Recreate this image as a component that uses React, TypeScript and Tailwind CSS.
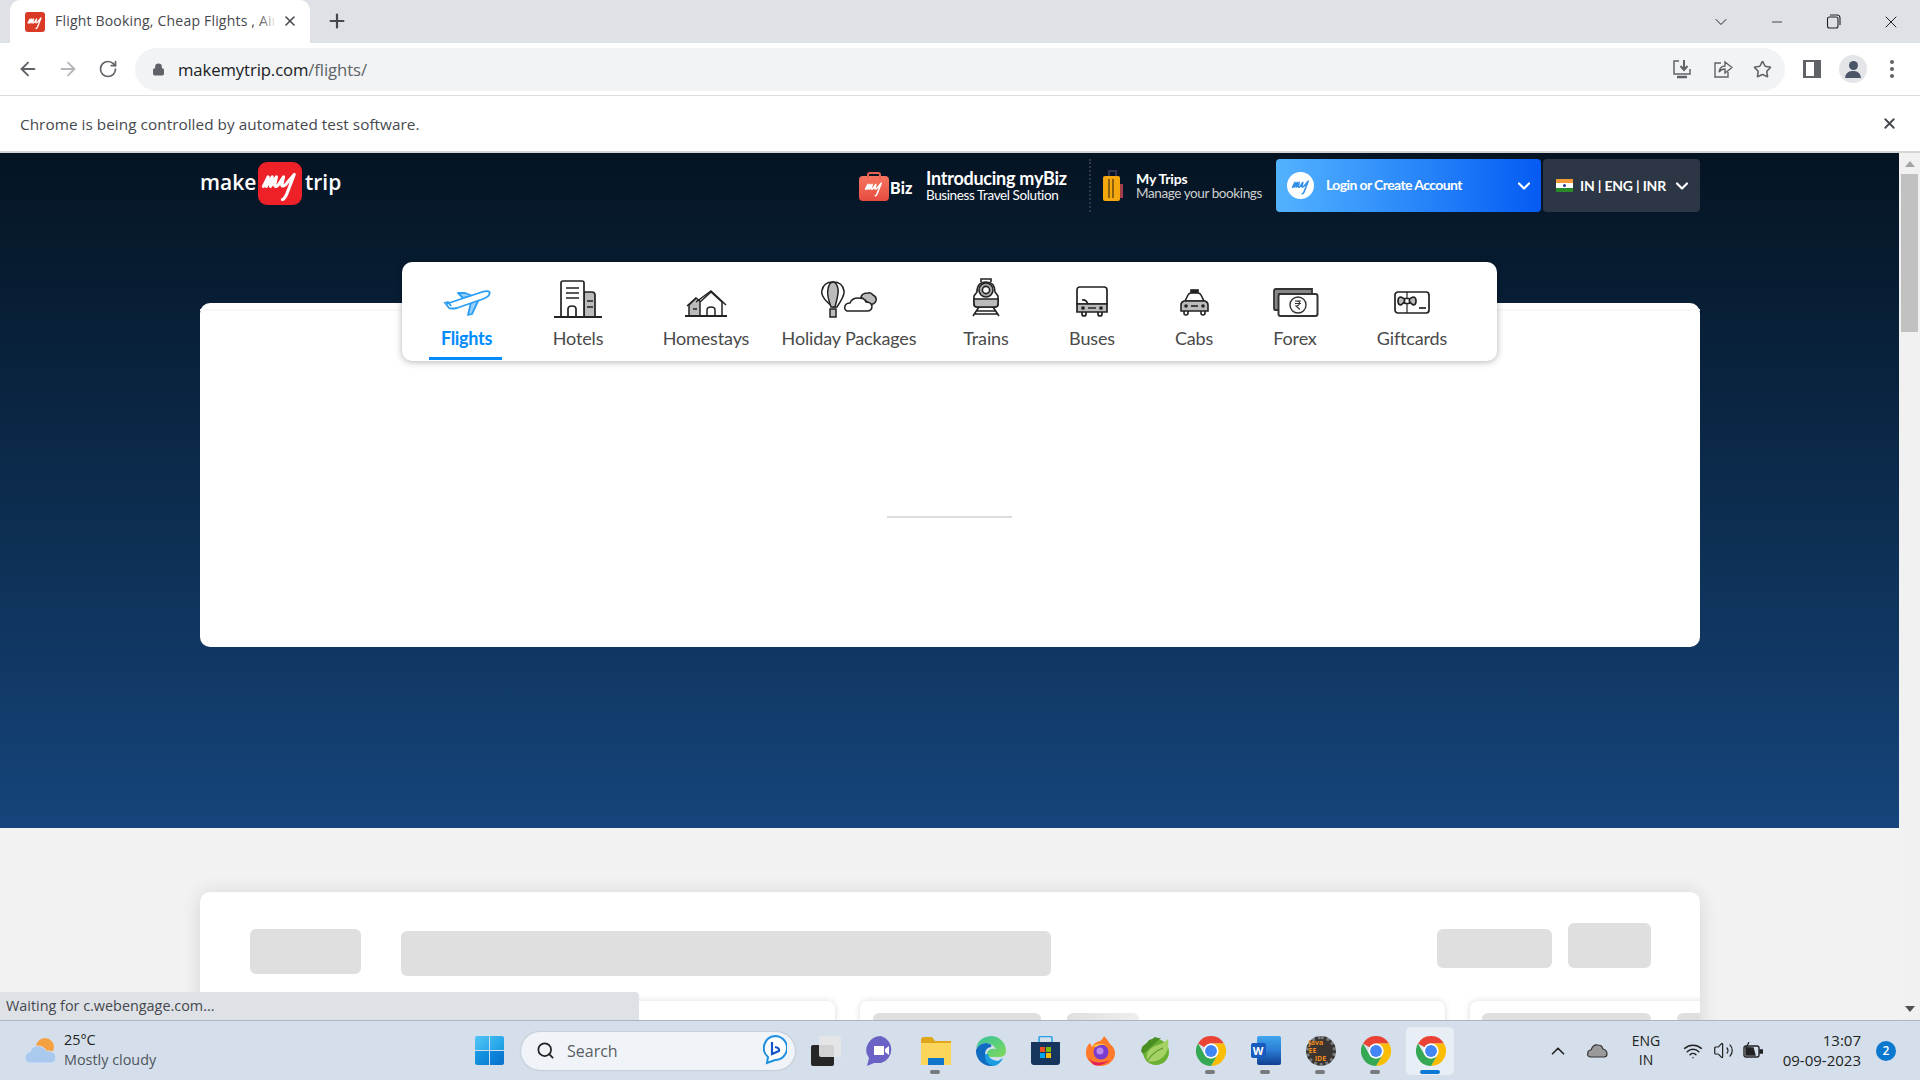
import { ReactNode } from "react";
import { ArrowLeft, ArrowRight, ChevronDown, ChevronUp, Lock, Minus, Plus, RotateCw, Search, Star, Volume2, Wifi, X } from "lucide-react";

function MyMark({ color = "#fff", className = "" }: { color?: string; className?: string }) {
  return (
    <svg viewBox="0 0 32 30" className={className} fill="none" stroke={color} strokeWidth="2.6" strokeLinecap="round" strokeLinejoin="round">
      <path d="M2 17 L6 9 L4.5 17 L9.5 9 L8 17 L13 9 L11.5 16 C12 18 14 17 15 15 L19 9 L17.5 16 C18 17 20 17 22 14 L28 7 L23 20 C21 26 19 28 18 28" />
    </svg>
  );
}

function ChromeLogo({ size = 30 }: { size?: number }) {
  return (
    <svg viewBox="0 0 48 48" width={size} height={size}>
      <path fill="#ea4335" d="M3.2 12A24 24 0 0 1 44.8 12H24a12 12 0 0 0-10.4 6z" />
      <path fill="#fbbc04" d="M44.8 12H24a12 12 0 0 1 10.4 18L24 48A24 24 0 0 0 44.8 12z" />
      <path fill="#34a853" d="M3.2 12L13.6 30a12 12 0 0 0 20.8 0L24 48A24 24 0 0 1 3.2 12z" />
      <circle cx="24" cy="24" r="12" fill="#fff" />
      <circle cx="24" cy="24" r="9.5" fill="#4285f4" />
    </svg>
  );
}

function PlaneIcon() {
  return (
    <svg width="48" height="27" viewBox="0 0 48 27" fill="none" stroke="#2a9df4" strokeWidth="1.8" strokeLinejoin="round">
      <path fill="#9ad0f8" d="M20 9 L15 4 H22 L30 7z" />
      <path fill="#9ad0f8" d="M28 13 L25 26 L29 25 L36 10z" />
      <path fill="#fff" d="M3 15 L36 4 Q44 1 46.5 3 Q47.5 7 40 10 L14 19 Q8 20 6 19z" />
      <path d="M1 14 L5 13 L8 17" />
    </svg>
  );
}

function HotelIcon() {
  return (
    <svg width="48" height="38" viewBox="0 0 48 38" fill="none" stroke="#222" strokeWidth="1.7">
      <path fill="#bbb" d="M30 12 H38 Q41 12 41 15 V37 H30z" />
      <path fill="#fff" d="M7 37 V3 Q7 1 9 1 H28 Q30 1 30 3 V37z" />
      <path d="M12 8 H25 M12 13 H25 M12 18 H25 M33 21 H39 M33 27 H39" />
      <path fill="#fff" d="M14 37 V29 Q14 26 18 26 Q22 26 22 29 V37" />
      <path d="M0 37 H48" strokeWidth="2" />
    </svg>
  );
}

function HomeIcon() {
  return (
    <svg width="42" height="27" viewBox="0 0 42 27" fill="none" stroke="#222" strokeWidth="1.5">
      <path fill="#bbb" d="M4 26 V15 L11 8 L16 12 V26z" />
      <path d="M2 16 L11 8" />
      <path fill="#fff" d="M15 26 V12 L26 2 L37 12 V26z" />
      <path d="M11 12 L26 1 L41 15 M8 19 H12" />
      <path fill="#fff" d="M22 26 V20 Q22 17 26 17 Q30 17 30 20 V26" />
      <path d="M0 26 H42" strokeWidth="1.8" />
    </svg>
  );
}

function BalloonIcon() {
  return (
    <svg width="57" height="37" viewBox="0 0 57 37" fill="none" stroke="#222" strokeWidth="1.5">
      <path fill="#fff" d="M12 26 C4 20 0 14 0.8 10 C2 3 7 1 12 1 C17 1 22 3 23 10 C24 14 20 20 16 26z" />
      <path fill="#bbb" d="M10 26 C7 18 6 12 7 8 C8 3 10 1 12 1 C14 1 16 3 17 8 C18 12 16 18 14 26z" />
      <path fill="#bbb" d="M9 28 H15 V36 H9z" />
      <path fill="#bbb" d="M40 16 Q41 12 47 12 Q50 11 52 14 Q56 16 55 20 Q53 24 49 23z" />
      <path fill="#fff" d="M26 30 Q23 29 24 25 Q25 22 29 22 Q31 17 37 17 Q44 17 45 21 Q50 21 51 25 Q51 30 46 30z" />
    </svg>
  );
}

function TrainIcon() {
  return (
    <svg width="28" height="39" viewBox="0 0 28 39" fill="none" stroke="#222" strokeWidth="1.6">
      <path d="M9 4 V1 H19 V4" />
      <path fill="#fff" d="M5 14 Q5 4 14 4 Q23 4 23 14 L26 18 V26 Q26 29 23 29 H5 Q2 29 2 26 V18z" />
      <circle cx="14" cy="12" r="7" fill="#aaa" />
      <circle cx="14" cy="12" r="3.6" fill="#fff" />
      <path fill="#bbb" d="M2 21 H26 V26 Q26 29 23 29 H5 Q2 29 2 26z" />
      <path d="M7 29 L1 38 M21 29 L27 38 M5 33 H23 M3 36 H25" />
    </svg>
  );
}

function BusIcon() {
  return (
    <svg width="32" height="31" viewBox="0 0 32 31" fill="none" stroke="#222" strokeWidth="1.7">
      <path fill="#fff" d="M1 4 Q1 1 4 1 H28 Q31 1 31 4 V18 H1z" />
      <path fill="#bbb" d="M1 18 H31 V26 H1z" />
      <path d="M6 14 Q10 13 12 18" />
      <circle cx="7" cy="22" r="1" fill="#222" />
      <circle cx="25" cy="22" r="1" fill="#222" />
      <path d="M12 22 H20" strokeWidth="1.4" />
      <path d="M6 26 V28 Q6 30 8 30 Q10 30 10 28 V26 M22 26 V28 Q22 30 24 30 Q26 30 26 28 V26" />
    </svg>
  );
}

function CabIcon() {
  return (
    <svg width="29" height="27" viewBox="0 0 29 27" fill="none" stroke="#222" strokeWidth="1.6">
      <rect x="11" y="1" width="7" height="3" fill="#222" />
      <path fill="#fff" d="M5 12 L8 6 Q9 4 11 4 H18 Q20 4 21 6 L24 12z" />
      <path fill="#bbb" d="M4 12 H25 Q28 13 28 16 V22 H1 V16 Q1 13 4 12z" />
      <circle cx="6" cy="17" r="1" fill="#222" />
      <circle cx="23" cy="17" r="1" fill="#222" />
      <path d="M11 17 H18" />
      <path d="M4 22 V24 Q4 26 6 26 Q8 26 8 24 V22 M21 22 V24 Q21 26 23 26 Q25 26 25 24 V22" />
    </svg>
  );
}

function ForexIcon() {
  return (
    <svg width="47" height="29" viewBox="0 0 47 29" fill="none" stroke="#333" strokeWidth="1.8">
      <path fill="#888" d="M2 3 Q2 1 4 1 H40 V6 H7 V22 H3 Q2 22 2 20z" />
      <rect x="6.5" y="6" width="39" height="22" rx="2" fill="#fff" strokeWidth="2" />
      <circle cx="26" cy="17" r="8" fill="#fff" strokeWidth="1.4" />
      <path d="M23 13 H29 M23 15.5 H29 M24 13 Q28 13 27.5 15.5 Q27 18 24 18 L28 21.5" strokeWidth="1.1" />
    </svg>
  );
}

function GiftIcon() {
  return (
    <svg width="36" height="23" viewBox="0 0 36 23" fill="none" stroke="#222" strokeWidth="1.7">
      <rect x="1" y="1" width="34" height="21" rx="3" fill="#fff" />
      <path d="M13 1 V22" strokeWidth="1.2" />
      <path fill="#bbb" d="M13 9 L7 6 Q4 6 4 10 Q4 14 7 14z" />
      <path fill="#bbb" d="M13 9 L19 6 Q22 6 22 10 Q22 14 19 14z" />
      <rect x="10.5" y="7.5" width="5" height="5" rx="1" fill="#fff" />
      <path d="M25 17 H32" />
    </svg>
  );
}

const navItems: { label: string; icon: ReactNode; width: string; iconPad: string; active?: boolean }[] = [
  { label: "Flights", icon: <PlaneIcon />, width: "w-[75px]", iconPad: "pb-[2px]", active: true },
  { label: "Hotels", icon: <HotelIcon />, width: "w-[148px]", iconPad: "pb-0" },
  { label: "Homestays", icon: <HomeIcon />, width: "w-[108px]", iconPad: "pb-[1px]" },
  { label: "Holiday Packages", icon: <BalloonIcon />, width: "w-[178px]", iconPad: "pb-0" },
  { label: "Trains", icon: <TrainIcon />, width: "w-[96px]", iconPad: "pb-[1px]" },
  { label: "Buses", icon: <BusIcon />, width: "w-[116px]", iconPad: "pb-[1px]" },
  { label: "Cabs", icon: <CabIcon />, width: "w-[88px]", iconPad: "pb-[2px]" },
  { label: "Forex", icon: <ForexIcon />, width: "w-[114px]", iconPad: "pb-[1px]" },
  { label: "Giftcards", icon: <GiftIcon />, width: "w-[120px]", iconPad: "pb-[4px]" },
];

function BrowserChrome() {
  return (
    <div className="shrink-0 font-['Open_Sans',sans-serif]">
      <div className="h-[43px] bg-[#dee1e6] flex items-end pl-[10px]">
        <div className="relative w-[300px] h-[43px] bg-white rounded-t-[10px] flex items-center pl-[15px] text-[#45484d]">
          <div className="w-5 h-5 rounded-[3px] bg-[#d93a26] flex items-center justify-center">
            <MyMark className="w-4 h-4" />
          </div>
          <span className="ml-[10px] -mt-[2px] w-[219px] overflow-hidden whitespace-nowrap text-[14px] tracking-[0.2px]">Flight Booking, Cheap Flights , Air Tickets</span>
          <div className="absolute left-[248px] top-[8px] w-[20px] h-[26px] bg-gradient-to-r from-white/0 to-white" />
          <X size={16} strokeWidth={2.4} className="absolute left-[272px] top-[13px] text-[#45484d]" />
        </div>
        <Plus size={22} strokeWidth={2.4} className="ml-[16px] mb-[11px] text-[#45484d]" />
        <div className="ml-auto flex items-center h-[43px] text-[#222]">
          <ChevronDown size={20} strokeWidth={1.2} className="mr-[38px]" />
          <Minus size={16} strokeWidth={1.2} className="mr-[41px]" />
          <svg width="15" height="15" viewBox="0 0 15 15" fill="none" stroke="#222" strokeWidth="1.1" className="mr-[40px]">
            <rect x="1.5" y="3" width="10.5" height="11" rx="2" />
            <path d="M4 1 H11 Q14 1 14 4 V11" />
          </svg>
          <X size={20} strokeWidth={1.2} className="mr-[19px]" />
        </div>
      </div>
      <div className="h-[53px] bg-white border-b border-[#dadce0] flex items-center text-[#5f6368]">
        <ArrowLeft size={22} strokeWidth={2} className="ml-[17px]" />
        <ArrowRight size={22} strokeWidth={2} className="ml-[18px] text-[#b4b6b9]" />
        <RotateCw size={20} strokeWidth={2} className="ml-[19px]" />
        <div className="ml-[17px] w-[1650px] h-[43px] rounded-full bg-[#f1f3f4] flex items-center pl-[17px]">
          <Lock size={13} fill="#5f6368" strokeWidth={2.2} />
          <span className="ml-[13px] mt-[1px] text-[16.7px] tracking-[-0.1px] text-[#202124]">
            makemytrip.com<span className="text-[#5f6368]">/flights/</span>
          </span>
          <div className="ml-auto flex items-center">
            <svg width="20" height="20" viewBox="0 0 20 20" fill="none" stroke="#5f6368" strokeWidth="1.5">
              <path d="M7 2 H2 V15 H18 V10" />
              <path d="M12 1 V10 M8.5 7 L12 11 L15.5 7" strokeWidth="2" />
              <path d="M5 18 H15" strokeWidth="2.5" />
            </svg>
            <svg width="20" height="20" viewBox="0 0 20 20" fill="none" stroke="#5f6368" strokeWidth="1.4" className="ml-[21px]">
              <path d="M8 4 H2 V18 H15 V13" />
              <path d="M6 13 Q7 7 12 7 V3 L19 8.5 L12 14 V10 Q8 10 6 13z" />
            </svg>
            <Star size={19} strokeWidth={2} className="ml-[20px] mr-[13px]" />
          </div>
        </div>
        <div className="ml-[18px] w-[18px] h-[18px] border-[2px] border-[#5f6368] border-l-[3px] border-r-[7px] bg-white" />
        <div className="ml-[18px] w-[28px] h-[28px] rounded-full bg-[#e3e5e8] flex flex-col items-center justify-center">
          <div className="w-[9px] h-[9px] rounded-full bg-[#4a5568]" />
          <div className="mt-[1px] w-[16px] h-[7px] rounded-t-full bg-[#4a5568]" />
        </div>
        <div className="ml-[23px] flex flex-col gap-[3px]">
          <div className="w-[4px] h-[4px] rounded-full bg-[#5f6368]" />
          <div className="w-[4px] h-[4px] rounded-full bg-[#5f6368]" />
          <div className="w-[4px] h-[4px] rounded-full bg-[#5f6368]" />
        </div>
      </div>
      <div className="h-[57px] bg-white border-b-2 border-[#d5d5d5] flex items-center pl-[20px] pr-[22px] justify-between">
        <span className="text-[15.3px] mt-[1px] text-[#45484d] tracking-[0.05px]">Chrome is being controlled by automated test software.</span>
        <X size={17} strokeWidth={2.6} className="text-[#45484d]" />
      </div>
    </div>
  );
}

function Header() {
  return (
    <div className="flex items-start pt-[6px] h-[59px] text-white">
      <div className="flex items-center mt-[3px] text-[21px] font-semibold font-['Open_Sans',sans-serif]">
        <span className="w-[58px] -mt-[2px]">make</span>
        <div className="w-[44px] h-[43px] rounded-[9px] bg-[#ee2128] flex items-center justify-center">
          <MyMark className="w-[38px] h-[36px]" />
        </div>
        <span className="ml-[3px] -mt-[2px]">trip</span>
      </div>
      <div className="ml-auto flex items-center h-[53px]">
        <div className="flex items-center w-[54px] ml-[1px]">
          <div className="relative w-[30px] h-[25px] mt-[5px] rounded-[4px] bg-gradient-to-b from-[#f57560] to-[#e64a3f] flex items-center justify-center">
            <div className="absolute -top-[4px] left-[8px] w-[14px] h-[6px] rounded-t-[3px] border-2 border-b-0 border-[#e8604f]" />
            <MyMark className="w-[20px] h-[18px]" />
          </div>
          <span className="ml-[1px] mt-[5px] text-[16px] font-black font-['Lato',sans-serif] tracking-[0.2px]">Biz</span>
        </div>
        <div className="ml-[13px] w-[150px] font-['Lato',sans-serif]">
          <div className="text-[18px] font-bold leading-[19px] tracking-[-0.25px] whitespace-nowrap">Introducing myBiz</div>
          <div className="text-[13.5px] leading-[14px] tracking-[-0.4px] whitespace-nowrap">Business Travel Solution</div>
        </div>
        <div className="ml-[13px] h-[53px] border-l-2 border-dotted border-[#2e3a4a]" />
        <svg width="20" height="31" viewBox="0 0 20 31" className="ml-[12px]">
          <path d="M6 7 V1 H13 V7" fill="none" stroke="#333355" strokeWidth="2" />
          <rect x="0" y="6" width="17" height="25" rx="2" fill="#f5a70e" />
          <rect x="17" y="14" width="3" height="14" fill="#a23c46" />
          <path d="M6 9 V28 M10 9 V28" stroke="#6a4a10" strokeWidth="1.5" />
        </svg>
        <div className="ml-[13px] w-[140px] font-['Lato',sans-serif]">
          <div className="text-[14px] font-bold leading-[15px] tracking-[-0.2px]">My Trips</div>
          <div className="text-[13.5px] leading-[15px] tracking-[-0.4px] text-[#cfcfcf] whitespace-nowrap">Manage your bookings</div>
        </div>
        <div className="w-[265px] h-[53px] rounded-[4px] bg-gradient-to-r from-[#53b2fe] to-[#065af3] flex items-center pl-[11px] font-['Lato',sans-serif]">
          <div className="w-[27px] h-[27px] rounded-full bg-white flex items-center justify-center">
            <MyMark color="#2f8de8" className="w-[20px] h-[18px]" />
          </div>
          <span className="ml-[12px] text-[14px] font-bold tracking-[-0.6px] -mt-[3px]">Login or Create Account</span>
          <ChevronDown size={20} strokeWidth={2.6} className="ml-auto mr-[7px]" />
        </div>
        <div className="ml-[2px] w-[157px] h-[53px] rounded-[4px] bg-[#2c3644] flex items-center pl-[13px] font-['Lato',sans-serif]">
          <div className="w-[17px] h-[14px] flex flex-col">
            <div className="h-1/3 bg-[#f29b38]" />
            <div className="h-1/3 bg-white flex items-center justify-center">
              <div className="w-[3px] h-[3px] rounded-full bg-[#2b3a8f]" />
            </div>
            <div className="h-1/3 bg-[#2a8a2a]" />
          </div>
          <span className="ml-[7px] text-[14px] font-bold whitespace-nowrap tracking-[-0.2px]">IN | ENG | INR</span>
          <ChevronDown size={20} strokeWidth={2.6} className="ml-auto mr-[8px]" />
        </div>
      </div>
    </div>
  );
}

function TabNav() {
  return (
    <div className="relative z-10 ml-[202px] mr-[203px] mt-[50px] h-[99px] bg-white rounded-[10px] shadow-[0_1px_7px_rgba(0,0,0,0.3)] flex pl-[27px] font-['Lato',sans-serif]">
      {navItems.map((item) => (
        <div key={item.label} className={`${item.width} shrink-0 flex flex-col items-center`}>
          <div className={`h-[56px] flex items-end justify-center ${item.iconPad}`}>{item.icon}</div>
          <div className={`mt-[9px] text-[18px] leading-[22px] whitespace-nowrap ${item.active ? "font-bold text-[#008cff] tracking-[-0.3px]" : "text-[#4a4a4a] tracking-[-0.15px]"}`}>{item.label}</div>
          {item.active && <div className="mt-[8px] mr-[3px] w-[73px] h-[3px] bg-[#008cff]" />}
        </div>
      ))}
    </div>
  );
}

function LowerSection() {
  return (
    <div className="ml-[200px] mr-[199px] mt-[64px] h-[300px] bg-white rounded-t-[10px] overflow-hidden shadow-[0_1px_20px_rgba(0,0,0,0.12)]">
      <div className="flex items-start pl-[50px] pr-[49px]">
        <div className="mt-[37px] w-[111px] h-[45px] rounded-[6px] bg-[#e0dfe0]" />
        <div className="mt-[39px] ml-[40px] w-[650px] h-[45px] rounded-[6px] bg-[#e0dfe0]" />
        <div className="mt-[37px] ml-auto w-[115px] h-[39px] rounded-[6px] bg-[#e0dfe0]" />
        <div className="mt-[31px] ml-[16px] w-[83px] h-[45px] rounded-[6px] bg-[#e0dfe0]" />
      </div>
      <div className="mt-[25px] ml-[50px] flex gap-[25px] w-[1650px]">
        <div className="w-[585px] shrink-0 h-[100px] rounded-[8px] bg-white shadow-[0_0_6px_rgba(0,0,0,0.15)]" />
        <div className="w-[585px] shrink-0 h-[100px] rounded-[8px] bg-white shadow-[0_0_6px_rgba(0,0,0,0.15)] flex gap-[26px] pl-[13px] pt-[12px]">
          <div className="w-[168px] h-[30px] rounded-[6px] bg-[#e0dfe0]" />
          <div className="w-[72px] h-[30px] rounded-[6px] bg-gradient-to-r from-[#e0dfe0] to-[#eeeeee]" />
        </div>
        <div className="w-[400px] shrink-0 h-[100px] rounded-[8px] bg-white shadow-[0_0_6px_rgba(0,0,0,0.15)] flex gap-[26px] pl-[12px] pt-[12px]">
          <div className="w-[169px] h-[30px] rounded-[6px] bg-[#e0dfe0]" />
          <div className="w-[72px] h-[30px] rounded-[6px] bg-[#e0dfe0]" />
        </div>
      </div>
    </div>
  );
}

function Scrollbar() {
  return (
    <div className="w-[21px] shrink-0 bg-[#f1f1f1] flex flex-col items-center">
      <svg width="10" height="6" viewBox="0 0 10 6" className="mt-[8px] shrink-0"><path d="M5 0 L10 6 H0z" fill="#a3a3a3" /></svg>
      <div className="mt-[7px] w-[17px] h-[158px] bg-[#c1c1c1]" />
      <svg width="10" height="6" viewBox="0 0 10 6" className="mt-auto mb-[8px] shrink-0"><path d="M5 6 L10 0 H0z" fill="#505050" /></svg>
    </div>
  );
}

function TaskIcon({ children, dot, active }: { children: ReactNode; dot?: boolean; active?: boolean }) {
  return (
    <div className="relative w-[55px] h-full flex items-center justify-center">
      {active && <div className="absolute left-[3px] top-[6px] w-[48px] h-[48px] rounded-[5px] bg-[#e8eef5]" />}
      <div className="relative">{children}</div>
      {dot && <div className="absolute left-[22px] bottom-[6px] w-[10px] h-[4px] rounded-full bg-[#77797c]" />}
      {active && <div className="absolute left-[17px] bottom-[6px] w-[20px] h-[4px] rounded-full bg-[#0a78d4]" />}
    </div>
  );
}

function WinLogo() {
  return (
    <div className="w-[29px] h-[29px] grid grid-cols-2 gap-[1px] shrink-0">
      <div className="bg-gradient-to-br from-[#52c5f5] to-[#2aa8ea] rounded-tl-[2px]" />
      <div className="bg-gradient-to-br from-[#3cb7f0] to-[#1a9ce3] rounded-tr-[2px]" />
      <div className="bg-gradient-to-br from-[#1a9ce3] to-[#0b7fd6] rounded-bl-[2px]" />
      <div className="bg-gradient-to-br from-[#0f8be0] to-[#0a6fc9] rounded-br-[2px]" />
    </div>
  );
}

function Taskbar() {
  return (
    <div className="h-[60px] shrink-0 bg-[#d5dfeb] border-t border-[#adb5bf] flex items-center font-['Open_Sans',sans-serif] text-[#222]">
      <div className="w-[475px] shrink-0 flex items-center pl-[25px]">
        <svg width="31" height="29" viewBox="0 0 31 29">
          <circle cx="20" cy="11" r="9" fill="#f5a142" />
          <path d="M6 27 Q0 27 0 22 Q0 17 5 16 Q7 9 14 10 Q20 11 21 15 Q30 14 31 21 Q31 27 25 27z" fill="#a9c9ee" stroke="#d8e6f6" strokeWidth="0.8" />
        </svg>
        <div className="ml-[8px] -mt-[2px] text-[14.4px] leading-[20px]">
          <div>25°C</div>
          <div className="text-[#4e545c]">Mostly cloudy</div>
        </div>
      </div>
      <WinLogo />
      <div className="ml-[17px] w-[274px] h-[38px] rounded-full bg-[#f0f4f9] shadow-[0_0_2px_rgba(0,0,0,0.25)] flex items-center pl-[15px] pr-[8px]">
        <Search size={19} strokeWidth={2.2} className="text-[#222]" />
        <span className="ml-[12px] text-[16px] text-[#5a5e63]">Search</span>
        <svg width="24" height="32" viewBox="0 0 24 32" className="ml-auto" fill="none">
          <path d="M12 1 A11 11 0 0 1 12 25 L4 28 L5 22 A12 12 0 0 1 12 1z" fill="#fff" stroke="#1d8fe0" strokeWidth="2" />
          <path d="M9 7 V19 L16 16 Q17 13 12 12" stroke="#1454c8" strokeWidth="2.2" />
        </svg>
      </div>
      <div className="ml-[3px] h-full flex">
        <TaskIcon>
          <div className="relative w-[30px] h-[30px]">
            <div className="absolute left-0 top-[9px] w-[23px] h-[21px] rounded-[2px] bg-[#262626]" />
            <div className="absolute left-[8px] top-0 w-[22px] h-[21px] rounded-[2px] bg-[#e6e6e6]/90" />
          </div>
        </TaskIcon>
        <TaskIcon>
          <svg width="30" height="30" viewBox="0 0 30 30">
            <path d="M15 0 A14 14 0 0 1 15 27 H8 L1 30 L3 22 A15 14 0 0 1 15 0z" fill="#6a63c5" />
            <path d="M8 10 H18 V19 H8z M19 13 L23 10 V19 L19 16z" fill="#fff" />
          </svg>
        </TaskIcon>
        <TaskIcon dot>
          <svg width="30" height="28" viewBox="0 0 30 28">
            <path d="M0 3 Q0 0 3 0 H11 L14 4 H30 V28 H0z" fill="#e0a619" />
            <path d="M0 6 H30 V28 H0z" fill="#fcd65a" />
            <path d="M7 21 H23 V28 H7z" fill="#0f76c9" />
          </svg>
        </TaskIcon>
        <TaskIcon>
          <svg width="30" height="30" viewBox="0 0 30 30">
            <defs>
              <linearGradient id="edgeA" x1="0" y1="0" x2="1" y2="1"><stop offset="0" stopColor="#36c3a0" /><stop offset="1" stopColor="#7fd957" /></linearGradient>
            </defs>
            <path d="M15 0 A15 15 0 0 1 30 15 Q30 21 23 21 H15 Q10 21 11 17 Q13 12 20 13 Q16 6 8 7 Q3 8 0 13 Q2 1 15 0z" fill="url(#edgeA)" />
            <path d="M0 14 Q3 7 10 7 Q17 8 15 11 Q9 12 9 18 Q10 26 20 29 Q17 30 15 30 A15 15 0 0 1 0 14z" fill="#0f6cc0" />
            <path d="M12 18 Q13 24 22 25 L27 22 Q24 29 17 30 Q8 27 9 18z" fill="#1b9de2" />
          </svg>
        </TaskIcon>
        <TaskIcon>
          <svg width="29" height="29" viewBox="0 0 29 29">
            <path d="M8 6 V2 Q8 0.5 10 0.5 H19 Q21 0.5 21 2 V6" fill="none" stroke="#27a0e5" strokeWidth="1.5" />
            <path d="M0 6 H29 V26 Q29 29 26 29 H3 Q0 29 0 26z" fill="#17365d" />
            <rect x="9" y="11" width="5" height="5" fill="#f25022" />
            <rect x="15" y="11" width="5" height="5" fill="#7fba00" />
            <rect x="9" y="17" width="5" height="5" fill="#00a4ef" />
            <rect x="15" y="17" width="5" height="5" fill="#ffb900" />
          </svg>
        </TaskIcon>
        <TaskIcon>
          <svg width="29" height="30" viewBox="0 0 29 30">
            <path d="M18 0 Q22 4 24 8 Q29 12 29 17 A14.5 13 0 0 1 0 17 Q0 10 4 7 L6 11 Q8 6 14 5 Q17 3 18 0z" fill="#ff7a2a" />
            <circle cx="15" cy="16" r="7.5" fill="#7a3bd0" />
            <circle cx="14" cy="15" r="3.5" fill="#b98ae8" />
            <path d="M6 10 Q14 6 20 9 Q14 8 10 11z" fill="#ffc43a" />
            <path d="M2 22 Q10 30 24 24 Q16 31 8 29z" fill="#e2205c" />
          </svg>
        </TaskIcon>
        <TaskIcon>
          <svg width="29" height="30" viewBox="0 0 29 30">
            <circle cx="15" cy="16" r="13" fill="#6ab033" />
            <path d="M3 9 L6 7 L8 4 L11 3 L14 1 L17 2 L20 2 L2 18 L0 15 L1 11z" fill="#4a8f22" />
            <path d="M6 25 Q4 14 14 10 Q22 8 27 3 Q29 14 22 21 Q15 27 6 25z" fill="#a5d264" />
            <path d="M6 25 Q12 16 22 12" fill="none" stroke="#5a9a2a" strokeWidth="1.2" />
          </svg>
        </TaskIcon>
        <TaskIcon dot><ChromeLogo /></TaskIcon>
        <TaskIcon dot>
          <div className="relative w-[30px] h-[29px]">
            <div className="absolute left-[6px] top-0 w-[24px] h-[29px] rounded-[2px] bg-gradient-to-b from-[#41a5ee] via-[#2b7cd3] to-[#103f91]" />
            <div className="absolute left-0 top-[7px] w-[15px] h-[15px] rounded-[2px] bg-[#185abd] text-white text-[11px] font-bold leading-[15px] text-center">W</div>
          </div>
        </TaskIcon>
        <TaskIcon dot>
          <div className="relative w-[30px] h-[30px] rounded-full border-[3px] border-dotted border-[#77797c] bg-[#3a3530] flex flex-col items-center justify-center text-[#f08a1d] text-[7px] leading-[8px] font-bold">
            <span>Java EE</span>
            <span>IDE</span>
          </div>
        </TaskIcon>
        <TaskIcon dot><ChromeLogo /></TaskIcon>
        <TaskIcon active><ChromeLogo /></TaskIcon>
      </div>
      <div className="ml-[89px] flex items-center h-full">
        <ChevronUp size={22} strokeWidth={1.8} />
        <svg width="21" height="14" viewBox="0 0 21 14" className="ml-[18px]">
          <path d="M4 13 Q0 13 0.8 9 Q1 6 4 6 Q6 0 11 1 Q15 1 16 5 Q20 6 20 10 Q20 13 17 13z" fill="#9a9a9a" stroke="#333" strokeWidth="1.2" />
        </svg>
        <div className="ml-[16px] -mt-[2px] w-[44px] text-center text-[14px] leading-[19px]">
          <div>ENG</div>
          <div>IN</div>
        </div>
        <Wifi size={20} strokeWidth={1.8} className="ml-[15px]" />
        <Volume2 size={21} strokeWidth={1.4} className="ml-[10px]" />
        <svg width="20" height="17" viewBox="0 0 20 17" className="ml-[9px]" fill="none" stroke="#222" strokeWidth="1.4">
          <rect x="1" y="4" width="15" height="11" rx="2" />
          <path d="M3 13 H12 L10 6 H3z" fill="#222" />
          <path d="M17 8 H19.5 V11 H17z" fill="#222" />
          <path d="M6 0 L3 6 H7 L5 10" strokeWidth="1.2" />
        </svg>
        <div className="ml-[11px] -mt-[2px] w-[87px] text-right text-[15px] leading-[20px]">
          <div>13:07</div>
          <div className="whitespace-nowrap">09-09-2023</div>
        </div>
        <div className="ml-[15px] w-[20px] h-[20px] rounded-full bg-[#0b78d0] text-white text-[12px] font-semibold flex items-center justify-center">2</div>
      </div>
    </div>
  );
}

export default function App() {
  return (
    <div className="w-[1920px] h-[1080px] overflow-hidden flex flex-col bg-white">
      <BrowserChrome />
      <div className="relative h-[867px] flex overflow-hidden">
        <div className="w-[1899px] bg-[#f2f2f2] overflow-hidden">
          <div className="h-[675px] bg-gradient-to-b from-[#051423] to-[#15457c] pl-[200px] pr-[199px]">
            <Header />
            <TabNav />
            <div className="-mt-[58px] h-[344px] bg-white rounded-[10px] flex flex-col items-center pt-[6px]">
              <div className="w-full h-[2px] bg-[#f8f8f8]" />
              <div className="mt-[205px] mr-[2px] w-[125px] h-[2px] bg-[#dcdcdc]" />
            </div>
          </div>
          <LowerSection />
        </div>
        <Scrollbar />
        <div className="absolute left-0 bottom-0 w-[639px] h-[28px] rounded-tr-[4px] bg-[#dee1e6] pl-[6px] text-[14.4px] leading-[28px] text-[#45484d] font-['Open_Sans',sans-serif]">Waiting for c.webengage.com...</div>
      </div>
      <Taskbar />
    </div>
  );
}
